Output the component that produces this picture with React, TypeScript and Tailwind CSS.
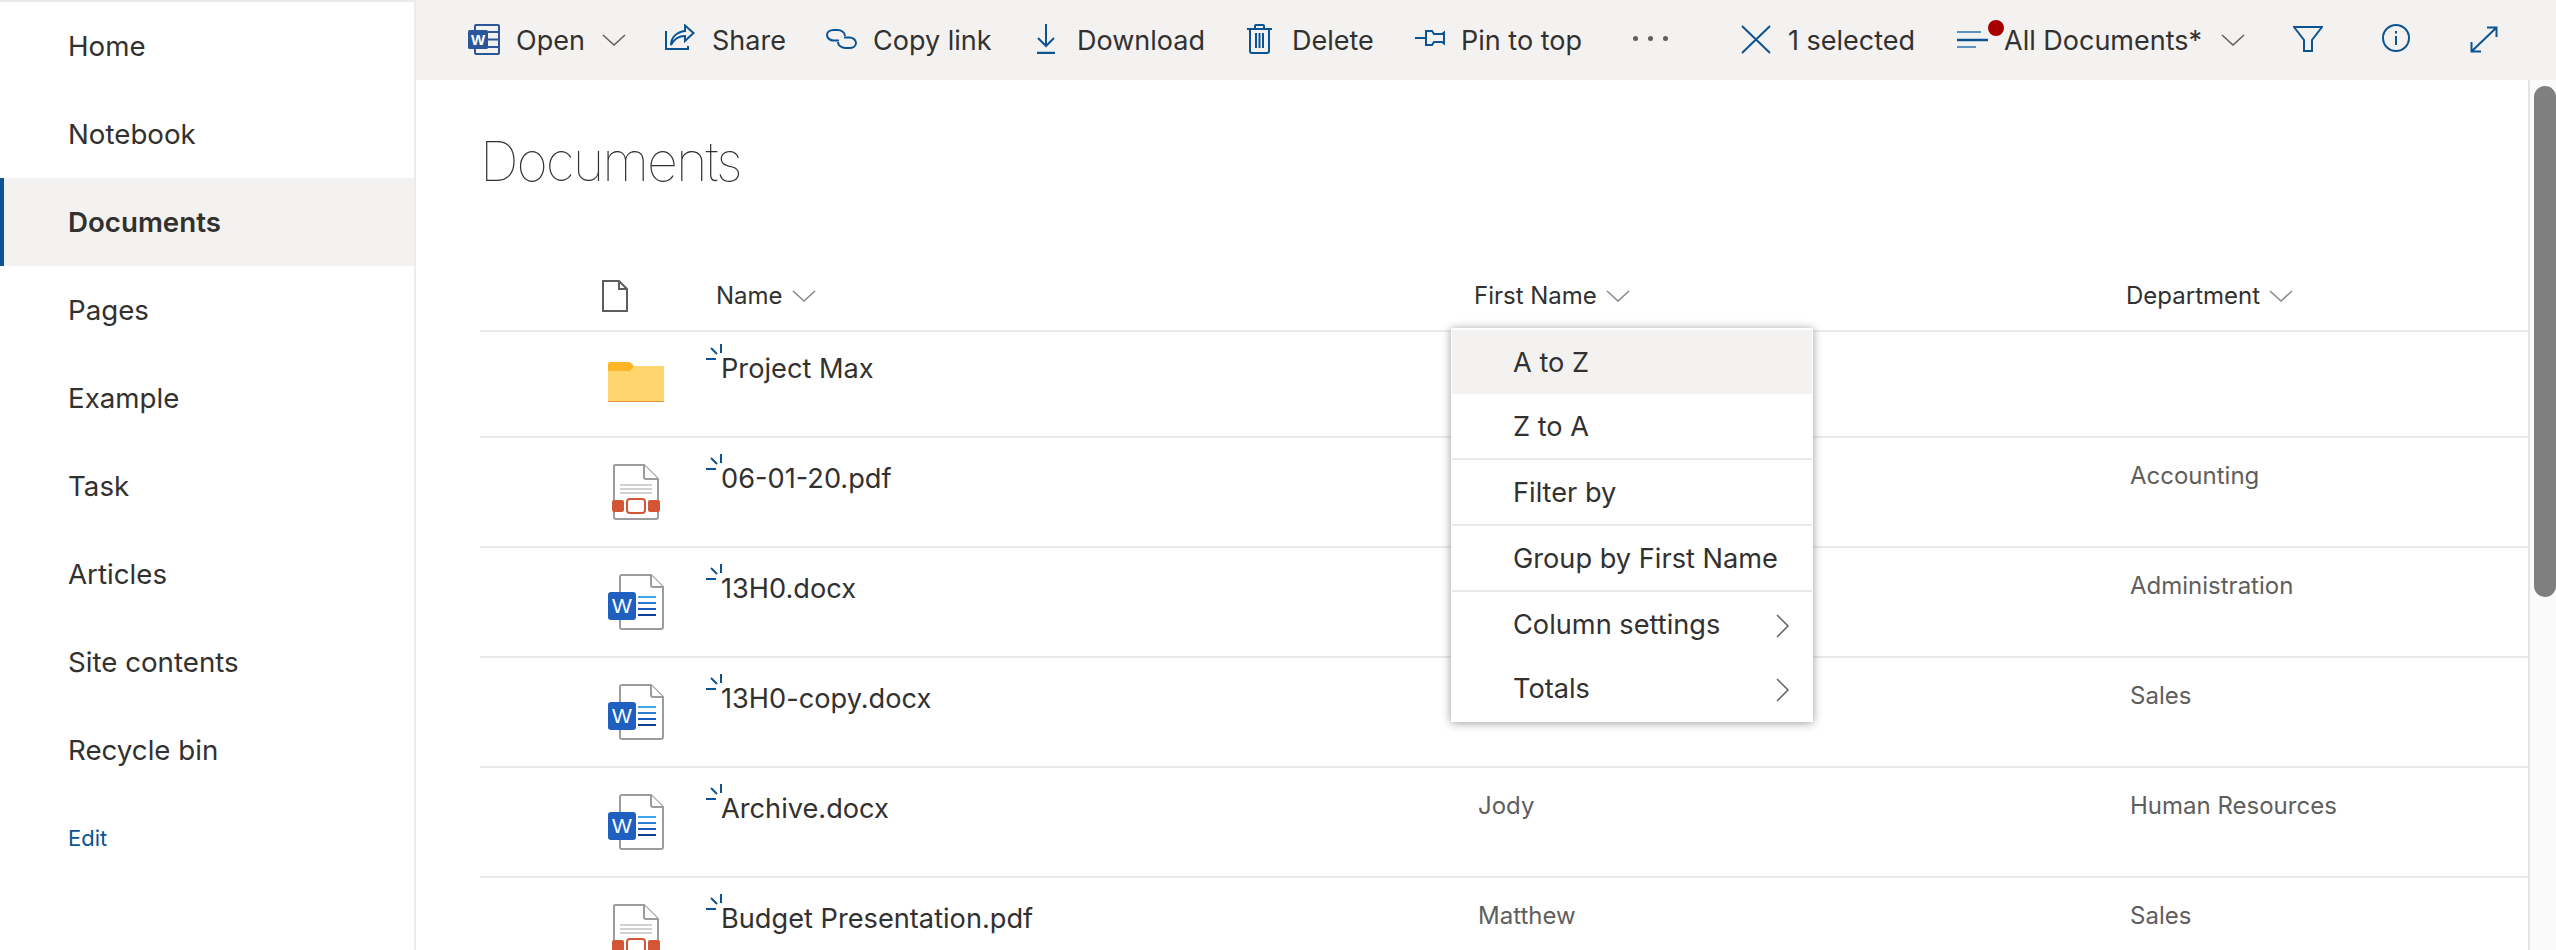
import React from "react";

const blue = "#0b5391";

const WordSmall = () => (
  <svg width="32" height="31" viewBox="0 0 32 31" fill="none" className="mb-[1px]">
    <rect x="7" y="1" width="24" height="29" rx="1" fill="#f3f2f1" stroke="#2b579a" strokeWidth="2" />
    <path d="M20 8h11M20 15.500h11M20 23h11" stroke="#2b579a" strokeWidth="2" />
    <rect x="0" y="6" width="20" height="19" rx="1.500" fill="#2b579a" />
    <text x="10" y="21" textAnchor="middle" fontSize="15" fontWeight="700" fill="#fff" fontFamily="Liberation Sans, sans-serif">
      W
    </text>
  </svg>
);
const ShareIcon = () => (
  <svg width="30" height="26" viewBox="0 0 30 26" fill="none" stroke={blue} strokeWidth="2" className="mb-[6px]">
    <path d="M1 7v18h22v-3" />
    <path d="M6 21C6 13 12 8 20 7V1.500L28.500 9 20 17v-5c-6 0-11 3-14 9z" />
  </svg>
);
const LinkIcon = () => (
  <svg width="31" height="20" viewBox="0 0 31 20" fill="none" stroke={blue} strokeWidth="2" className="mb-[3px]">
    <path d="M13 11.500H7.500C4 11.500 1 9 1 6s3-5 6.500-5h4C15.500 1 19 3.500 19 7" />
    <path d="M18 8.500h5.500C27 8.500 30 11 30 14s-3 5-6.500 5h-4C15.500 19 12 16.500 12 13" />
  </svg>
);
const DownloadIcon = () => (
  <svg width="20" height="30" viewBox="0 0 20 30" fill="none" stroke={blue} strokeWidth="2" className="mb-[2px]">
    <path d="M10 0v22M2 14l8 8 8-8" />
    <path d="M1 29h18" strokeWidth="2.500" />
  </svg>
);
const TrashIcon = () => (
  <svg width="25" height="30" viewBox="0 0 25 30" fill="none" stroke={blue} strokeWidth="2" className="mb-[2px]">
    <path d="M0 5h25M8 5V2a1 1 0 011-1h7a1 1 0 011 1v3" />
    <path d="M3 5v22a2 2 0 002 2h15a2 2 0 002-2V5" />
    <path d="M9 9v15M12.500 9v15M16 9v15" />
  </svg>
);
const PinIcon = () => (
  <svg width="30" height="16" viewBox="0 0 30 16" fill="none" stroke={blue} strokeWidth="2" className="mb-[4px]">
    <path d="M0 8h11" />
    <path d="M11 1h6l2 3h8l2-1.500v11L27 12h-8l-2 3h-6z" />
  </svg>
);
const CloseIcon = () => (
  <svg width="30" height="29" viewBox="0 0 30 29" fill="none" stroke={blue} strokeWidth="2" className="mb-[2px]">
    <path d="M1 1l28 27M29 1L1 28" />
  </svg>
);
const ViewIcon = () => (
  <svg width="31" height="18" viewBox="0 0 31 18" fill="none" stroke="#5a93c2" strokeWidth="2" className="block">
    <path d="M0 2h24" />
    <path d="M0 10h31" stroke={blue} strokeWidth="2.500" />
    <path d="M0 17h19" />
  </svg>
);
const FilterIcon = () => (
  <svg width="30" height="26" viewBox="0 0 30 26" fill="none" stroke={blue} strokeWidth="2" className="mb-[2px]">
    <path d="M1 1h28L19 14v11h-8V14z" />
  </svg>
);
const InfoIcon = () => (
  <svg width="28" height="28" viewBox="0 0 28 28" fill="none" stroke={blue} strokeWidth="2" className="mb-[4px]">
    <circle cx="14" cy="14" r="13" />
    <path d="M14 12v9" />
    <path d="M14 7v2.500" />
  </svg>
);
const ExpandIcon = () => (
  <svg width="28" height="27" viewBox="0 0 28 27" fill="none" stroke={blue} strokeWidth="2" className="mb-[2px]">
    <path d="M2 25L26 2M17 1.500h9.500V11M1.500 16v9.500H11" />
  </svg>
);
const Chevron = ({ color = "#605e5c", w = 24 }: { color?: string; w?: number }) => (
  <svg width={w} height={w / 2} viewBox="0 0 24 12" fill="none" stroke={color} strokeWidth="1.500">
    <path d="M1 1l11 10L23 1" />
  </svg>
);
const ChevronRight = () => (
  <svg width="14" height="24" viewBox="0 0 14 24" fill="none" stroke="#605e5c" strokeWidth="1.500">
    <path d="M1 1l11 11L1 23" />
  </svg>
);
const BlankFile = () => (
  <svg width="26" height="32" viewBox="0 0 26 32" fill="none" stroke="#605e5c" strokeWidth="2">
    <path d="M1 1h16l8 8v22H1zM17 1v8h8" />
  </svg>
);
const Sparkle = () => (
  <svg width="17" height="16" viewBox="0 0 17 16" fill="none" stroke={blue} strokeWidth="2" className="absolute left-[-15px] top-[-8px]">
    <path d="M15 0v9M5 4l6 6M0 15h10" />
  </svg>
);
const FolderIcon = () => (
  <svg width="56" height="40" viewBox="0 0 56 40">
    <path d="M2 0h18c1.500 0 2.500 .5 3.500 1.500L26 4h28a2 2 0 012 2v32a2 2 0 01-2 2H2a2 2 0 01-2-2V2a2 2 0 012-2z" fill="#ffb528" />
    <path d="M0 9h22l4-5h28a2 2 0 012 2v32a2 2 0 01-2 2H2a2 2 0 01-2-2z" fill="#ffd66e" />
    <path d="M0 39h56v.2a1 1 0 01-1 .8H1a1 1 0 01-1-1z" fill="#e8913a" />
  </svg>
);
const PdfIcon = () => (
  <svg width="48" height="56" viewBox="0 0 48 56" fill="none">
    <path d="M3 1h29l14 14v38a2 2 0 01-2 2H4a2 2 0 01-2-2V2a1 1 0 011-1z" fill="#fff" stroke="#9c9c9c" strokeWidth="2" />
    <path d="M32 1v12a2 2 0 002 2h12" fill="#fff" stroke="#9c9c9c" strokeWidth="2" />
    <path d="M8 21h32M8 25h32M8 29h32" stroke="#c2c2c2" strokeWidth="1.500" />
    <rect x="0" y="36" width="12" height="12" rx="2" fill="#d35636" />
    <rect x="36" y="36" width="12" height="12" rx="2" fill="#d35636" />
    <rect x="15" y="35" width="18" height="14" rx="3" fill="#fff" stroke="#d35636" strokeWidth="2" />
  </svg>
);
const WordIcon = () => (
  <svg width="56" height="56" viewBox="0 0 56 56" fill="none">
    <path d="M14 1h29l12 12v40a2 2 0 01-2 2H14a2 2 0 01-2-2V3a2 2 0 012-2z" fill="#fff" stroke="#9c9c9c" strokeWidth="2" />
    <path d="M43 1v10a2 2 0 002 2h10" fill="#fff" stroke="#9c9c9c" strokeWidth="2" />
    <path d="M30 23h18" stroke="#41a5ee" strokeWidth="2" />
    <path d="M30 29h18" stroke="#2b7cd3" strokeWidth="2" />
    <path d="M30 35h18" stroke="#185abd" strokeWidth="2" />
    <path d="M30 41h18" stroke="#103f91" strokeWidth="2" />
    <rect x="0" y="18" width="28" height="28" rx="3" fill="#1e5fbf" />
    <text x="14" y="39" textAnchor="middle" fontSize="21" fill="#fff" fontFamily="Liberation Sans, sans-serif">
      W
    </text>
  </svg>
);

const navItems = ["Home", "Notebook", "Documents", "Pages", "Example", "Task", "Articles", "Site contents", "Recycle bin"];

const files = [
  { name: "Project Max", type: "folder", first: "", dept: "" },
  { name: "06-01-20.pdf", type: "pdf", first: "", dept: "Accounting" },
  { name: "13H0.docx", type: "word", first: "", dept: "Administration" },
  { name: "13H0-copy.docx", type: "word", first: "", dept: "Sales" },
  { name: "Archive.docx", type: "word", first: "Jody", dept: "Human Resources" },
  { name: "Budget Presentation.pdf", type: "pdf", first: "Matthew", dept: "Sales" },
];

const ToolItem = ({
  icon,
  label,
  width,
  chevron,
  gap = "ml-[16px]",
}: {
  icon: React.ReactNode;
  label?: string;
  width: string;
  chevron?: boolean;
  gap?: string;
}) => (
  <div className={`flex items-center shrink-0 ${width}`}>
    {icon}
    {label && <span className={`${gap} pt-[2px] text-[27px] text-[#323130] whitespace-nowrap`}>{label}</span>}
    {chevron && (
      <span className="ml-[17px] flex">
        <Chevron />
      </span>
    )}
  </div>
);

const Row = ({ file }: { file: (typeof files)[number] }) => (
  <div className="grid grid-cols-[236px_759px_652px_1fr] h-[110px] border-b-2 border-[#edebe9]">
    <div className={`flex ${file.type === "pdf" ? "pl-[132px]" : "pl-[128px]"} ${file.type === "folder" ? "pt-[34px]" : "pt-[26px]"}`}>
      {file.type === "folder" && <FolderIcon />}
      {file.type === "pdf" && <PdfIcon />}
      {file.type === "word" && <WordIcon />}
    </div>
    <div className="pl-[5px] pt-[24px]">
      <span className="relative inline-block text-[27.2px] leading-[34px] text-[#323130] whitespace-nowrap">
        <Sparkle />
        {file.name}
      </span>
    </div>
    <div className="pl-[3px] pt-[23px] text-[24px] leading-[30px] text-[#605e5c]">{file.first}</div>
    <div className="pl-[3px] pt-[23px] text-[24px] leading-[30px] text-[#605e5c]">{file.dept}</div>
  </div>
);

const MenuItem = ({
  label,
  height,
  active,
  divider,
  sub,
}: {
  label: string;
  height: string;
  active?: boolean;
  divider?: boolean;
  sub?: boolean;
}) => (
  <div
    className={`flex items-center justify-between ${height} pt-[2px] pl-[61px] pr-[22px] text-[27.2px] text-[#323130] ${active ? "bg-[#f3f2f1]" : ""} ${
      divider ? "border-b-2 border-[#edebe9]" : ""
    }`}
  >
    <span>{label}</span>
    {sub && <ChevronRight />}
  </div>
);

export default function App() {
  return (
    <div className="flex w-[2556px] h-[950px] overflow-hidden bg-white font-[family-name:Inter,sans-serif]">
      <nav className="w-[416px] shrink-0 border-t-2 border-r-2 border-[#edebe9]">
        {navItems.map((item) => (
          <div
            key={item}
            className={`flex items-center h-[88px] pt-[2px] text-[27.7px] text-[#323130] ${
              item === "Documents" ? "pl-[64px] border-l-4 border-[#0b5391] bg-[#f3f2f1] font-semibold" : "pl-[68px]"
            }`}
          >
            {item}
          </div>
        ))}
        <div className="flex items-center h-[88px] pl-[68px] text-[22px] text-[#0b5391]">Edit</div>
      </nav>

      <div className="flex-1 flex flex-col min-w-0">
        <div className="flex items-center h-[80px] shrink-0 pl-[52px] bg-[#f3f2f1]">
          <ToolItem width="w-[197px]" icon={<WordSmall />} label="Open" chevron />
          <ToolItem width="w-[161px]" icon={<ShareIcon />} label="Share" gap="ml-[17px]" />
          <ToolItem width="w-[210px]" icon={<LinkIcon />} label="Copy link" />
          <ToolItem width="w-[211px]" icon={<DownloadIcon />} label="Download" gap="ml-[21px]" />
          <ToolItem width="w-[168px]" icon={<TrashIcon />} label="Delete" gap="ml-[20px]" />
          <ToolItem width="w-[218px]" icon={<PinIcon />} label="Pin to top" gap="ml-[16px]" />
          <div className="w-[108px] shrink-0 flex gap-[10px] pb-[3px]">
            <span className="w-[5px] h-[5px] rounded-full bg-[#605e5c]" />
            <span className="w-[5px] h-[5px] rounded-full bg-[#605e5c]" />
            <span className="w-[5px] h-[5px] rounded-full bg-[#605e5c]" />
          </div>
          <ToolItem width="w-[216px]" icon={<CloseIcon />} label="1 selected" gap="ml-[17px]" />
          <div className="flex items-center w-[333px] shrink-0">
            <span className="relative flex mb-[2px]">
              <ViewIcon />
              <span className="absolute left-[31px] top-[-10px] w-[16px] h-[16px] rounded-full bg-[#a80000]" />
            </span>
            <span className="ml-[16px] pt-[2px] text-[27px] text-[#323130] whitespace-nowrap">All Documents*</span>
            <span className="ml-[19px] flex">
              <Chevron />
            </span>
          </div>
          <div className="w-[92px] shrink-0 flex pl-[3px]">
            <FilterIcon />
          </div>
          <div className="w-[88px] shrink-0 flex">
            <InfoIcon />
          </div>
          <ExpandIcon />
        </div>

        <div className="flex-1 flex min-h-0">
          <div className="relative flex-1 pl-[64px] min-w-0">
            <h1 className="pt-[52px] h-[161px] text-[54px] leading-[60px] font-thin tracking-[-2px] text-[#323130]">Documents</h1>
            <div className="grid grid-cols-[236px_759px_652px_1fr] h-[91px] pt-[20px] items-center border-b-2 border-[#edebe9] text-[24px] text-[#323130]">
              <div className="flex pl-[122px]">
                <BlankFile />
              </div>
              <div className="flex items-center gap-[9px]">
                Name
                <Chevron color="#8a8886" />
              </div>
              <div className="flex items-center gap-[9px] -ml-px">
                First Name
                <Chevron color="#8a8886" />
              </div>
              <div className="flex items-center gap-[9px] -ml-px">
                Department
                <Chevron color="#8a8886" />
              </div>
            </div>
            <div className="-mt-1">
              {files.map((file) => (
                <Row key={file.name} file={file} />
              ))}
            </div>

            <div className="absolute left-[1035px] top-[248px] w-[362px] bg-white py-[2px] px-[1px] shadow-[0_1px_9px_rgba(0,0,0,0.4)]">
              <MenuItem label="A to Z" height="h-[64px]" active />
              <MenuItem label="Z to A" height="h-[66px]" divider />
              <MenuItem label="Filter by" height="h-[66px]" divider />
              <MenuItem label="Group by First Name" height="h-[66px]" divider />
              <MenuItem label="Column settings" height="h-[65px]" sub />
              <MenuItem label="Totals" height="h-[63px]" sub />
            </div>
          </div>

          <div className="w-[28px] shrink-0 border-l-2 border-[#e5e5e5] bg-[#fafafa] pl-[4px] pt-[6px]">
            <div className="w-[22px] h-[511px] rounded-[11px] bg-[#7f7f7f]" />
          </div>
        </div>
      </div>
    </div>
  );
}
